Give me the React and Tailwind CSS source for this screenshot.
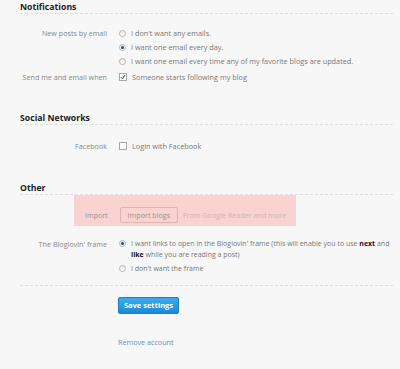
import React from "react";

function Radio({ checked }) {
  return (
    <span className="relative inline-block w-[7px] h-[7px] rounded-full border border-[#b5b5b5] bg-gradient-to-b from-[#e6e6e6] to-[#ffffff] shrink-0">
      {checked && (
        <span className="absolute left-[1px] top-[1px] w-[3px] h-[3px] rounded-full bg-[#1d4f80]" />
      )}
    </span>
  );
}

function Checkbox({ checked }) {
  return (
    <span className="relative inline-flex items-center justify-center w-[8px] h-[8px] border border-[#a9a9a9] bg-white shrink-0">
      {checked && (
        <svg width="6" height="6" viewBox="0 0 6 6" className="block">
          <path d="M1 3.2 L2.4 4.8 L5 1" fill="none" stroke="#23456e" strokeWidth="1" />
        </svg>
      )}
    </span>
  );
}

function Heading({ children, className = "" }) {
  return (
    <div className={"border-b border-dashed border-[#dedede] " + className}>
      <h2 className="text-[8.7px] leading-[12px] font-bold text-[#222]">{children}</h2>
    </div>
  );
}

function Option({ type, checked, children }) {
  return (
    <div className="flex items-start gap-[5px] text-[7.3px] text-[#777]">
      <span className="h-[12px] flex items-center">
        {type === "radio" ? <Radio checked={checked} /> : <Checkbox checked={checked} />}
      </span>
      <span>{children}</span>
    </div>
  );
}

export default function App() {
  return (
    <div className="min-h-[369px] bg-[#f7f7f7] font-['Open_Sans',sans-serif] text-[7.2px] leading-[12px] text-[#888] pl-[20px] pr-[7px] pt-[1px]">
      <Heading>Notifications</Heading>

      <div className="grid grid-cols-[87px_1fr] gap-x-[12px] mt-[13px]">
        <div className="text-right whitespace-nowrap">New posts by email</div>
        <div className="flex flex-col gap-[2px]">
          <Option type="radio">I don't want any emails.</Option>
          <Option type="radio" checked>I want one email every day.</Option>
          <Option type="radio">I want one email every time any of my favorite blogs are updated.</Option>
        </div>
        <div className="text-right whitespace-nowrap mt-[4px]">Send me and email when</div>
        <div className="mt-[4px]">
          <Option type="checkbox" checked>Someone starts following my blog</Option>
        </div>
      </div>

      <Heading className="mt-[29px]">Social Networks</Heading>

      <div className="grid grid-cols-[87px_1fr] gap-x-[12px] mt-[15px]">
        <div className="text-right">Facebook</div>
        <div>
          <Option type="checkbox">Login with Facebook</Option>
        </div>
      </div>

      <Heading className="mt-[30px]">Other</Heading>

      <div className="ml-[54px] w-[222px] h-[31px] bg-[#f8d3d1] flex items-center gap-[12px] pl-[11px] pt-[9px] text-[#a39191]">
        <span>Import</span>
        <button className="h-[16px] w-[58px] rounded-[2px] border border-[#dcb4b2] text-[#a39191] text-[7.2px] leading-[14px]">
          Import blogs
        </button>
        <span className="text-[#cdb3b1] -ml-[7px]">From Google Reader and more</span>
      </div>

      <div className="grid grid-cols-[87px_1fr] gap-x-[12px] mt-[12px]">
        <div className="text-right">The Bloglovin' frame</div>
        <div className="flex flex-col gap-[3px] leading-[11px] text-[7px] text-[#777]">
          <div className="flex items-start gap-[5px]">
            <span className="h-[11px] flex items-center"><Radio checked /></span>
            <span>
              I want links to open in the Bloglovin' frame (this will enable you to use{" "}
              <b className="text-[#2a0f2a]">next</b> and <b className="text-[#2a0f2a]">like</b> while you are reading a post)
            </span>
          </div>
          <div className="flex items-start gap-[5px]">
            <span className="h-[11px] flex items-center"><Radio /></span>
            <span>I don't want the frame</span>
          </div>
        </div>
      </div>

      <div className="border-b border-dashed border-[#dedede] mt-[11px]" />

      <div className="pl-[98px] mt-[11px]">
        <button className="h-[17px] w-[61px] rounded-[2px] border border-[#1c7dc4] bg-gradient-to-b from-[#3cabee] to-[#1e8ad6] text-white font-bold text-[7.5px] leading-[15px]">
          Save settings
        </button>
      </div>

      <div className="pl-[98px] mt-[22px] text-[#6a8ec4]">Remove account</div>
    </div>
  );
}
